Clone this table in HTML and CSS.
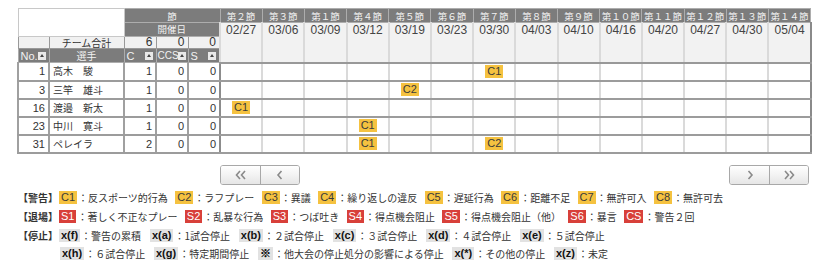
FILE: index.html
```html
<!DOCTYPE html>
<html lang="ja">
<head>
<meta charset="utf-8">
<link rel="stylesheet" href="styles.css">
</head>
<body>
<div class="wrap">
<table class="grid">
<colgroup>
<col class="c-no"><col class="c-name"><col class="c-num"><col class="c-num"><col class="c-num">
<col class="c-m"><col class="c-m"><col class="c-m"><col class="c-m"><col class="c-m"><col class="c-m"><col class="c-m">
<col class="c-m"><col class="c-m"><col class="c-m"><col class="c-m"><col class="c-m"><col class="c-m"><col class="c-m">
</colgroup>
<tr>
<td class="blank" colspan="2" rowspan="2"></td>
<th class="dk" colspan="3"><span class="hd">節</span></th>
<th class="dk"><span class="hd">第２節</span></th><th class="dk"><span class="hd">第３節</span></th><th class="dk"><span class="hd">第１節</span></th><th class="dk"><span class="hd">第４節</span></th><th class="dk"><span class="hd">第５節</span></th><th class="dk"><span class="hd">第６節</span></th><th class="dk"><span class="hd">第７節</span></th><th class="dk"><span class="hd">第８節</span></th><th class="dk"><span class="hd">第９節</span></th><th class="dk"><span class="hd">第１０節</span></th><th class="dk"><span class="hd">第１１節</span></th><th class="dk"><span class="hd">第１２節</span></th><th class="dk"><span class="hd">第１３節</span></th><th class="dk"><span class="hd">第１４節</span></th>
</tr>
<tr>
<th class="dk" colspan="3"><span class="hd hd2">開催日</span></th>
<td class="date" rowspan="3">02/27</td><td class="date" rowspan="3">03/06</td><td class="date" rowspan="3">03/09</td><td class="date" rowspan="3">03/12</td><td class="date" rowspan="3">03/19</td><td class="date" rowspan="3">03/23</td><td class="date" rowspan="3">03/30</td><td class="date" rowspan="3">04/03</td><td class="date" rowspan="3">04/10</td><td class="date" rowspan="3">04/16</td><td class="date" rowspan="3">04/20</td><td class="date" rowspan="3">04/27</td><td class="date" rowspan="3">04/30</td><td class="date last" rowspan="3">05/04</td>
</tr>
<tr>
<td class="tot"><span class="td3"></span></td><td class="tot tot-label"><span class="td3">チーム合計</span></td><td class="tot tot-v"><span class="td3">6</span></td><td class="tot tot-v"><span class="td3">0</span></td><td class="tot tot-v"><span class="td3">0</span></td>
</tr>
<tr>
<th class="dk hl"><span class="hd4">No.</span><span class="sort"></span></th>
<th class="dk hc"><span class="hd4">選手</span></th>
<th class="dk hl"><span class="hd4">C</span><span class="sort"></span></th>
<th class="dk hl tight"><span class="hd4">CCS</span><span class="sort"></span></th>
<th class="dk hl"><span class="hd4">S</span><span class="sort"></span></th>
</tr>
<tr class="row">
<td class="no">1</td><td class="name">高木　駿</td><td class="v">1</td><td class="v">0</td><td class="v end">0</td>
<td class="m"></td><td class="m"></td><td class="m"></td><td class="m"></td><td class="m"></td><td class="m"></td><td class="m"><span class="b yl">C1</span></td><td class="m"></td><td class="m"></td><td class="m"></td><td class="m"></td><td class="m"></td><td class="m"></td><td class="m last"></td>
</tr>
<tr class="row">
<td class="no">3</td><td class="name">三竿　雄斗</td><td class="v">1</td><td class="v">0</td><td class="v end">0</td>
<td class="m"></td><td class="m"></td><td class="m"></td><td class="m"></td><td class="m"><span class="b yl">C2</span></td><td class="m"></td><td class="m"></td><td class="m"></td><td class="m"></td><td class="m"></td><td class="m"></td><td class="m"></td><td class="m"></td><td class="m last"></td>
</tr>
<tr class="row">
<td class="no">16</td><td class="name">渡邉　新太</td><td class="v">1</td><td class="v">0</td><td class="v end">0</td>
<td class="m"><span class="b yl">C1</span></td><td class="m"></td><td class="m"></td><td class="m"></td><td class="m"></td><td class="m"></td><td class="m"></td><td class="m"></td><td class="m"></td><td class="m"></td><td class="m"></td><td class="m"></td><td class="m"></td><td class="m last"></td>
</tr>
<tr class="row">
<td class="no">23</td><td class="name">中川　寛斗</td><td class="v">1</td><td class="v">0</td><td class="v end">0</td>
<td class="m"></td><td class="m"></td><td class="m"></td><td class="m"><span class="b yl">C1</span></td><td class="m"></td><td class="m"></td><td class="m"></td><td class="m"></td><td class="m"></td><td class="m"></td><td class="m"></td><td class="m"></td><td class="m"></td><td class="m last"></td>
</tr>
<tr class="row">
<td class="no">31</td><td class="name">ペレイラ</td><td class="v">2</td><td class="v">0</td><td class="v end">0</td>
<td class="m"></td><td class="m"></td><td class="m"></td><td class="m"><span class="b yl">C1</span></td><td class="m"></td><td class="m"></td><td class="m"><span class="b yl">C2</span></td><td class="m"></td><td class="m"></td><td class="m"></td><td class="m"></td><td class="m"></td><td class="m"></td><td class="m last"></td>
</tr>
</table>

<div class="pager">
<div class="pgroup">
<span class="pbtn"><svg width="12" height="10" viewBox="0 0 12 10"><polyline points="5,1 1.5,5 5,9" /><polyline points="10,1 6.5,5 10,9" /></svg></span>
<span class="pbtn"><svg width="8" height="10" viewBox="0 0 8 10"><polyline points="5.5,1 2,5 5.5,9" /></svg></span>
</div>
<div class="pgroup">
<span class="pbtn"><svg width="8" height="10" viewBox="0 0 8 10"><polyline points="2.5,1 6,5 2.5,9" /></svg></span>
<span class="pbtn"><svg width="12" height="10" viewBox="0 0 12 10"><polyline points="2,1 5.5,5 2,9" /><polyline points="7,1 10.5,5 7,9" /></svg></span>
</div>
</div>

<div class="legend">
<div class="line">
<span class="lab">【警告】</span>
<span class="it"><span class="b yl">C1</span>：反スポーツ的行為</span>
<span class="it"><span class="b yl">C2</span>：ラフプレー</span>
<span class="it"><span class="b yl">C3</span>：異議</span>
<span class="it"><span class="b yl">C4</span>：繰り返しの違反</span>
<span class="it"><span class="b yl">C5</span>：遅延行為</span>
<span class="it"><span class="b yl">C6</span>：距離不足</span>
<span class="it"><span class="b yl">C7</span>：無許可入</span>
<span class="it"><span class="b yl">C8</span>：無許可去</span>
</div>
<div class="line">
<span class="lab">【退場】</span>
<span class="it"><span class="b rd">S1</span>：著しく不正なプレー</span>
<span class="it"><span class="b rd">S2</span>：乱暴な行為</span>
<span class="it"><span class="b rd">S3</span>：つば吐き</span>
<span class="it"><span class="b rd">S4</span>：得点機会阻止</span>
<span class="it"><span class="b rd">S5</span>：得点機会阻止（他）</span>
<span class="it"><span class="b rd">S6</span>：暴言</span>
<span class="it"><span class="b rd">CS</span>：警告２回</span>
</div>
<div class="line wide">
<span class="lab">【停止】</span>
<span class="it"><span class="b gy">x(f)</span>：警告の累積</span>
<span class="it"><span class="b gy">x(a)</span>：1試合停止</span>
<span class="it"><span class="b gy">x(b)</span>：２試合停止</span>
<span class="it"><span class="b gy">x(c)</span>：３試合停止</span>
<span class="it"><span class="b gy">x(d)</span>：４試合停止</span>
<span class="it"><span class="b gy">x(e)</span>：５試合停止</span>
</div>
<div class="line wide indent">
<span class="it"><span class="b gy">x(h)</span>：６試合停止</span>
<span class="it"><span class="b gy">x(g)</span>：特定期間停止</span>
<span class="it"><span class="b gy">※</span>：他大会の停止処分の影響による停止</span>
<span class="it"><span class="b gy">x(*)</span>：その他の停止</span>
<span class="it"><span class="b gy">x(z)</span>：未定</span>
</div>
</div>
</div>
</body>
</html>
```
FILE: styles.css
```css
* { box-sizing: border-box; }
body {
  margin: 0;
  background: #fff;
  color: #333;
  font-family: "Liberation Sans", "Noto Sans CJK JP", sans-serif;
}
.wrap { padding: 8px 18px 0 17px; }

.grid {
  border-collapse: collapse;
  table-layout: fixed;
  width: 793px;
  font-size: 10px;
  line-height: 12px;
}
.c-no { width: 31px; }
.c-name { width: 75px; }
.c-num { width: 32px; }
.c-m { width: 42.2px; }

.grid td, .grid th {
  padding: 0;
  border: 1px solid #c8c8c8;
  font-weight: normal;
  white-space: nowrap;
  overflow: hidden;
  vertical-align: top;
}
.blank { background: #fff; border-color: #d0d0d0; }
.dk {
  background: #7c7c7c;
  color: #f2f2f2;
  text-align: center;
  border: 1px solid #adadad !important;
  font-family: "Noto Sans CJK JP", sans-serif;
  font-size: 9.5px;
}
.hd {
  display: block;
  height: 13px;
  line-height: 15px;
}
.hd.hd2 { line-height: 13px; }
.hd4 {
  display: block;
  height: 13px;
  line-height: 14px;
}
.td3 {
  display: block;
  height: 11px;
  line-height: 11px;
}
.date {
  background: #f2f2f2;
  text-align: center;
  font-size: 12px;
  line-height: 14px;
  color: #444;
  border-left: 2px solid #dadada !important;
  border-right: 2px solid #dadada !important;
  border-bottom: 2px solid #999 !important;
  border-top: 0 !important;
}
.date.last, .m.last { border-right: 2px solid #8a8a8a !important; }
.grid .tot {
  background: #f1f1f1;
  border-color: #999 !important;
  font-size: 12px;
  color: #333;
  overflow: visible;
}
.grid .tot-label {
  font-family: "Noto Sans CJK JP", sans-serif;
  font-size: 10px;
  text-align: center;
}
.tot-v { text-align: right; padding-right: 3px !important; }

.hl {
  text-align: left !important;
  padding-left: 2px !important;
  font-family: "Liberation Sans", sans-serif !important;
  font-size: 11px !important;
  position: relative;
}
.hc { font-size: 10px; }
.sort {
  position: absolute;
  right: 3px;
  top: 3px;
  width: 8px;
  height: 8px;
  background: #e9e9e9;
}
.sort::after {
  content: "";
  position: absolute;
  left: 2px;
  top: 2px;
  border-left: 2px solid transparent;
  border-right: 2px solid transparent;
  border-bottom: 3px solid #444;
}
.tight { font-size: 10px !important; padding-left: 1px !important; }
.tight .sort { right: 2px; }

.row { height: 18px; }
.row td {
  border-top: 0;
  border-bottom: 2px solid #9c9c9c;
  border-left: 2px solid #a0a0a0;
  border-right: 2px solid #a0a0a0;
  font-size: 11px;
  vertical-align: middle;
}
.row td.m {
  border-left: 2px solid #dadada;
  border-right: 2px solid #dadada;
  text-align: center;
}
.row td.end { border-right: 2px solid #8c8c8c; }
.no { text-align: right; padding-right: 3px !important; }
.name {
  padding-left: 3px !important;
  font-family: "Noto Sans CJK JP", sans-serif;
  font-size: 10px !important;
}
.v { text-align: right; padding-right: 3px !important; }

.b {
  display: inline-block;
  font-family: "Liberation Sans", sans-serif;
  font-size: 11px;
  line-height: 13px;
  padding: 0 2px;
  vertical-align: middle;
}
.yl { background: #f5c240; color: #3a3a3a; }
.rd { background: #d8403a; color: #fff; }
.gy { background: #e2e2e2; color: #111; font-weight: bold; padding: 0 2px; }

.pager {
  display: flex;
  justify-content: space-between;
  margin: 11px 1px 0 203px;
}
.pgroup {
  display: flex;
  border: 1px solid #a8a8a8;
  border-radius: 3px;
  overflow: hidden;
}
.pbtn {
  width: 39px;
  height: 18px;
  display: flex;
  align-items: center;
  justify-content: center;
  background: linear-gradient(#ffffff, #e6e6e6);
}
.pbtn + .pbtn { border-left: 1px solid #a8a8a8; }
.pbtn svg polyline {
  fill: none;
  stroke: #8a8a8a;
  stroke-width: 1.6;
}

.legend {
  margin-top: 3px;
  padding-left: 1px;
  font-family: "Liberation Sans", "Noto Sans CJK JP", sans-serif;
  font-size: 10px;
  color: #333;
}
.line {
  display: flex;
  align-items: center;
  height: 19px;
  white-space: nowrap;
}
.line.indent { padding-left: 42px; height: 18px; }
.lab {
  font-family: "Noto Sans CJK JP", sans-serif;
  font-weight: bold;
  width: 41px;
}
.it {
  font-family: "Noto Sans CJK JP", sans-serif;
  margin-right: 7.4px;
  display: inline-flex;
  align-items: center;
}
.wide .it { margin-right: 8.8px; }
.it .b { margin-right: 1px; }
```
